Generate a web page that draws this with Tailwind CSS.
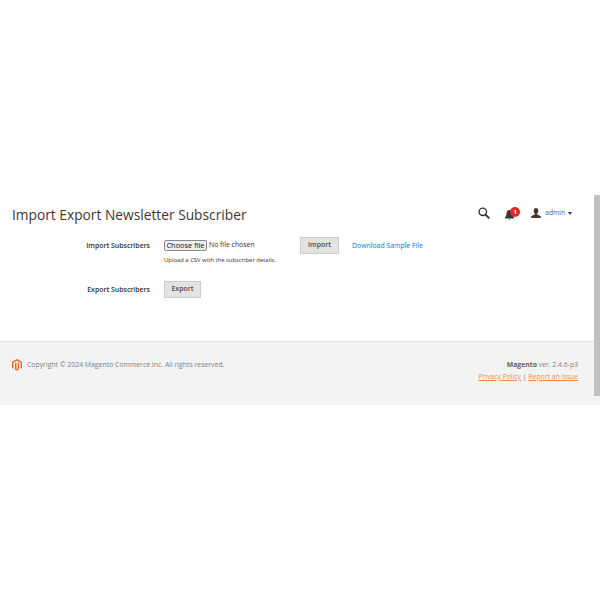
<!DOCTYPE html>
<html lang="en">
<head>
<meta charset="UTF-8">
<title>Import Export Newsletter Subscriber</title>
<script src="https://cdn.jsdelivr.net/npm/@tailwindcss/browser@4"></script>
</head>
<body class="h-[600px] overflow-hidden bg-white font-['Open_Sans',sans-serif]">
  <div class="pt-[195px]">
    <header class="h-[42px] pl-3 pr-[28px] flex justify-between">
      <h1 class="mt-[10px] text-[13.750px] leading-[20px] text-[#41362f]">Import Export Newsletter Subscriber</h1>
      <div class="mt-[8px] flex items-center h-[20px] text-[#41362f]">
        <svg class="w-[12px] h-[12px]" viewBox="0 0 12 12" fill="none" stroke="#2f2f2f"><circle cx="4.800" cy="4.800" r="3.700" stroke-width="1.300"/><path d="M7.600 7.600 11.300 11.300" stroke-width="1.800"/></svg>
        <div class="relative ml-[15px] w-[9px] h-[13px]">
          <svg class="absolute top-[3px] left-0 w-[9px] h-[10px]" viewBox="0 0 9 10" fill="#41362f"><path d="M4.500 0C2.400 0 1.600 1.600 1.500 3.500 1.400 5.500 .8 6.600 0 7.500V8.500H9V7.500C8.200 6.600 7.600 5.500 7.500 3.500 7.400 1.600 6.600 0 4.500 0ZM3.300 9a1.300 1 0 0 0 2.400 0Z"/></svg>
          <span class="absolute left-[5px] top-0 w-[10px] h-[10px] rounded-full bg-[#e22626] text-white text-[6px] leading-[10px] font-bold text-center">1</span>
        </div>
        <svg class="ml-[17px] w-[10px] h-[10px]" viewBox="0 0 10 10" fill="#41362f"><path d="M5 0C3.500 0 2.700 1.200 2.700 2.800 2.700 4 3.200 5 3.900 5.600V6.500C2.500 7.200.6 7.600.2 8.500V10H9.800V8.500C9.400 7.600 7.500 7.200 6.100 6.500V5.600C6.800 5 7.300 4 7.300 2.800 7.300 1.200 6.500 0 5 0Z"/></svg>
        <span class="ml-[4px] text-[6.700px] text-[#676056]">admin</span>
        <span class="ml-[3px] w-0 h-0 border-x-[2.500px] border-x-transparent border-t-[3px] border-t-[#41362f]"></span>
      </div>
    </header>
    <main class="h-[104px]">
      <div class="flex items-start h-[28px]">
        <div class="w-[150px] text-right text-[6.950px] font-semibold leading-[17px] text-[#303030]">Import Subscribers</div>
        <div class="ml-[14px] w-[136px]">
          <div class="flex items-center mt-[3px] h-[11px] text-[6.900px] text-[#303030]">
            <button class="w-[43px] h-[11px] leading-[9px] bg-[#efefef] border border-[#8a8a8a] rounded-[2px] text-[7.400px] text-[#111]">Choose file</button>
            <span class="ml-[2px]">No file chosen</span>
          </div>
          <p class="mt-[5px] text-[5.900px] leading-[9px] text-[#303030]">Upload a CSV with the subscriber details.</p>
        </div>
        <button class="w-[39px] h-[17px] bg-[#e3e3e3] border border-[#cccccc] text-[6.950px] font-semibold text-[#514943]">Import</button>
        <a class="ml-[13px] text-[6.900px] leading-[17px] text-[#007bdb]" href="#">Download Sample File</a>
      </div>
      <div class="flex items-center mt-[16px]">
        <div class="w-[150px] text-right text-[6.950px] font-semibold leading-[17px] text-[#303030]">Export Subscribers</div>
        <button class="ml-[14px] w-[37px] h-[17px] bg-[#e3e3e3] border border-[#cccccc] text-[6.950px] font-semibold text-[#514943]">Export</button>
      </div>
    </main>
  </div>
  <footer class="h-[64px] bg-[#f3f3f3] border-t border-[#e3e3e3] flex justify-between pl-3 pr-[22px] pt-[17px]">
    <div class="flex items-start">
      <svg class="w-[10px] h-[12px]" viewBox="0 0 10 12" fill="#f26322"><path d="M5 0 0 2.900V9L1.400 9.800V3.700L5 1.700 8.600 3.700V9.800L10 9V2.900ZM4.400 3.500 3 4.300V10.400L5 11.700 7 10.400V4.300L5.600 3.500V9.800L5 10.200 4.400 9.800Z"/></svg>
      <p class="ml-[5px] text-[6.880px] leading-[12px] text-[#808080]">Copyright © 2024 Magento Commerce Inc. All rights reserved.</p>
    </div>
    <div class="text-right text-[6.850px] text-[#808080]">
      <p class="leading-[12px]"><b class="font-bold text-[#676056]">Magento</b> ver. 2.4.6-p3</p>
      <p class="leading-[12px]"><a class="underline text-[#eb5202]/70" href="#">Privacy Policy</a> | <a class="underline text-[#eb5202]/70" href="#">Report an Issue</a></p>
    </div>
  </footer>
  <div class="fixed right-0 top-[195px] w-[6px] h-[201px] bg-[#c1c1c1]"></div>
</body>
</html>
